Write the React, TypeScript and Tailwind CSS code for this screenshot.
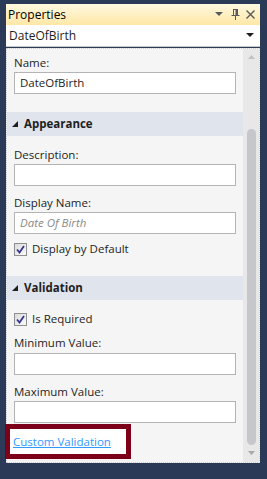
import React from "react";

const font = { fontFamily: '"Open Sans", "Noto Sans", sans-serif' };

function Label({ children, className = "" }: { children: React.ReactNode; className?: string }) {
    return <div className={`h-[16px] text-[11.5px] leading-[16px] text-[#1e1e1e] ${className}`}>{children}</div>;
}

function Field({ value, placeholder, className = "" }: { value?: string; placeholder?: string; className?: string }) {
    return (
        <div className={`h-[22px] border border-[#b4b4b4] bg-white px-[5px] flex items-center text-[11.5px] ${className}`}>
            {value ? (
                <span className="text-[#1e1e1e]">{value}</span>
            ) : placeholder ? (
                <span className="italic text-[#8a8a8a]">{placeholder}</span>
            ) : null}
        </div>
    );
}

function Check({ label, className = "" }: { label: string; className?: string }) {
    return (
        <div className={`flex items-center gap-[5px] h-[16px] ${className}`}>
            <div className="w-[13px] h-[13px] border border-[#8f8f8f] bg-gradient-to-br from-[#dcdcdc] to-[#fafafa] flex items-center justify-center">
                <svg width="9" height="9" viewBox="0 0 9 9">
                    <path d="M1 4.5 L3.5 7.5 L8 1" fill="none" stroke="#35348f" strokeWidth="1.8" />
                </svg>
            </div>
            <span className="text-[11.5px] text-[#1e1e1e]">{label}</span>
        </div>
    );
}

function Section({ title, className = "" }: { title: string; className?: string }) {
    return (
        <div className={`h-[24px] bg-[#e0e4ec] flex items-center pl-[5px] gap-[6px] ${className}`}>
            <svg width="6" height="6" viewBox="0 0 6 6">
                <path d="M6 0 L6 6 L0 6 Z" fill="#1e1e1e" />
            </svg>
            <span className="text-[11.5px] font-bold text-[#1e1e1e]">{title}</span>
        </div>
    );
}

export default function App() {
    return (
        <div className="w-[267px] h-[479px] bg-[#2b3a56] pt-[4px] pl-[6px] pr-[7px] pb-[16px] flex flex-col" style={font}>
            {/* title bar */}
            <div className="h-[21px] bg-gradient-to-b from-[#fff8e0] to-[#ffe8a6] flex items-center pl-[2px] pr-[5px]">
                <span className="text-[12px] text-black flex-1">Properties</span>
                <svg width="8" height="5" viewBox="0 0 8 5" className="mr-[8px]">
                    <path d="M0 0 L8 0 L4 4 Z" fill="#5a5a5a" />
                </svg>
                <svg width="9" height="11" viewBox="0 0 9 11" className="mr-[6px]">
                    <path d="M2 0.5 H7 M2.5 0.5 V6 M6.5 0.5 V6 M0.5 6.5 H8.5 M4.5 6.5 V11" stroke="#5a5a5a" strokeWidth="1" fill="none" />
                    <rect x="4.5" y="1" width="2" height="5" fill="#5a5a5a" />
                </svg>
                <svg width="9" height="9" viewBox="0 0 9 9">
                    <path d="M0.5 0.5 L8.5 8.5 M8.5 0.5 L0.5 8.5" stroke="#5a5a5a" strokeWidth="1.4" />
                </svg>
            </div>
            {/* object selector */}
            <div className="h-[22px] bg-white flex items-center pl-[3px] pr-[6px] border-b border-[#c8c8c8]">
                <span className="text-[12px] text-[#1e1e1e] flex-1">DateOfBirth</span>
                <svg width="8" height="5" viewBox="0 0 8 5">
                    <path d="M0 0 L8 0 L4 4 Z" fill="#1e1e1e" />
                </svg>
            </div>
            {/* body */}
            <div className="flex-1 mt-[1px] border border-dotted border-[#c9ced8] bg-[#f5f5f5] flex">
                <div className="flex-1 flex flex-col">
                    <div className="px-[7px]">
                        <Label className="mt-[6px]">Name:</Label>
                        <Field value="DateOfBirth" className="mt-[1px]" />
                    </div>
                    <Section title="Appearance" className="mt-[18px]" />
                    <div className="px-[7px]">
                        <Label className="mt-[11px]">Description:</Label>
                        <Field className="mt-[1px]" />
                        <Label className="mt-[9px]">Display Name:</Label>
                        <Field placeholder="Date Of Birth" className="mt-[1px]" />
                        <Check label="Display by Default" className="mt-[7px]" />
                    </div>
                    <Section title="Validation" className="mt-[19px] h-[23px]" />
                    <div className="px-[7px]">
                        <Check label="Is Required" className="mt-[11px]" />
                        <Label className="mt-[8px]">Minimum Value:</Label>
                        <Field className="mt-[2px]" />
                        <Label className="mt-[9px]">Maximum Value:</Label>
                        <Field className="mt-[1px]" />
                    </div>
                    <div className="mt-[1px] ml-[-2px] w-[126px] h-[35px] border-[5px] border-[#7c0019] bg-white flex items-center pl-[3px]">
                        <span className="text-[11.5px] text-[#3399ff] underline">Custom Validation</span>
                    </div>
                </div>
                {/* scrollbar */}
                <div className="w-[16px] bg-[#e8e8e8] flex flex-col items-center">
                    <svg width="7" height="4" viewBox="0 0 7 4" className="mt-[6px]">
                        <path d="M0 4 L3.5 0 L7 4 Z" fill="#c2c2c2" />
                    </svg>
                    <div className="w-[9px] mt-[70px] h-[316px] rounded-[5px] bg-[#c6c7cb]" />
                    <svg width="7" height="4" viewBox="0 0 7 4" className="mt-[6px]">
                        <path d="M0 0 L7 0 L3.5 4 Z" fill="#a8a8a8" />
                    </svg>
                </div>
            </div>
        </div>
    );
}
